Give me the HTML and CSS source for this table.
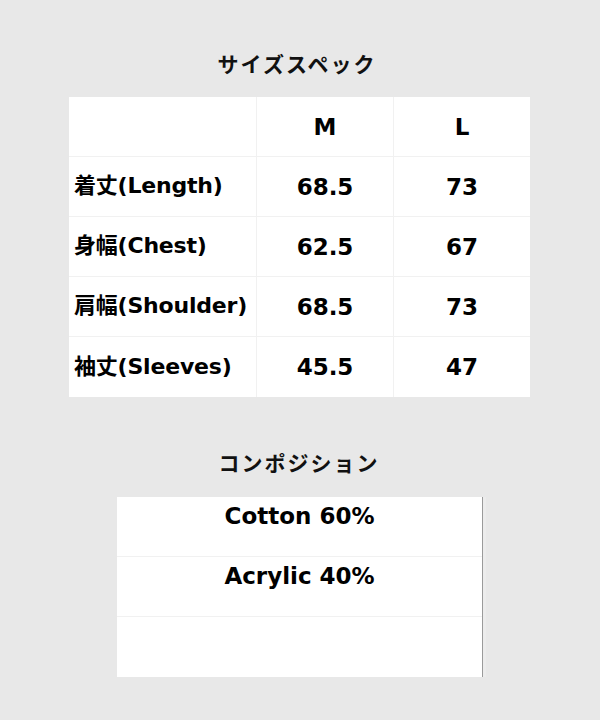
FILE: index.html
```html
<!DOCTYPE html>
<html lang="ja">
<head>
<meta charset="utf-8">
<title>サイズスペック</title>
<link rel="stylesheet" href="styles.css">
</head>
<body>
<main class="page">
  <h2 class="title title-size">サイズスペック</h2>
  <div class="spec">
    <div class="cell label"></div>
    <div class="cell head">M</div>
    <div class="cell head last">L</div>

    <div class="cell label">着丈(Length)</div>
    <div class="cell num">68.5</div>
    <div class="cell num last">73</div>

    <div class="cell label">身幅(Chest)</div>
    <div class="cell num">62.5</div>
    <div class="cell num last">67</div>

    <div class="cell label">肩幅(Shoulder)</div>
    <div class="cell num">68.5</div>
    <div class="cell num last">73</div>

    <div class="cell label bottom">袖丈(Sleeves)</div>
    <div class="cell num bottom">45.5</div>
    <div class="cell num last bottom">47</div>
  </div>

  <h2 class="title title-comp">コンポジション</h2>
  <div class="comp">
    <div class="comp-row">Cotton 60%</div>
    <div class="comp-row">Acrylic 40%</div>
    <div class="comp-row bottom"></div>
  </div>
</main>
</body>
</html>
```

FILE: styles.css
```css
html, body {
  margin: 0;
  padding: 0;
}
body {
  background: #e8e8e8;
  width: 600px;
  height: 720px;
  overflow: hidden;
  color: #000;
  font-family: "DejaVu Sans", "Noto Sans CJK JP", sans-serif;
}
.page {
  display: flex;
  flex-direction: column;
  align-items: center;
}
.title {
  margin: 0;
  font-family: "Noto Sans CJK JP", sans-serif;
  font-weight: 700;
  font-size: 21px;
  line-height: 30px;
  letter-spacing: 2px;
  color: #111;
  text-align: center;
}
.title-size {
  margin-top: 48px;
  margin-bottom: 19px;
  margin-left: -6px;
}
.title-comp {
  margin-top: 50px;
  margin-bottom: 20px;
  margin-left: -2px;
}
.spec {
  display: grid;
  grid-template-columns: 188px 137px 136px;
  grid-auto-rows: 60px;
  background: #fff;
  margin-left: -1px;
}
.cell {
  border-right: 1px solid #f1f1f1;
  border-bottom: 1px solid #f1f1f1;
  display: flex;
  align-items: center;
  font-weight: bold;
  line-height: 28px;
}
.cell.last {
  border-right: none;
}
.cell.bottom {
  border-bottom: none;
}
.label {
  padding-left: 5px;
  padding-bottom: 1px;
  font-size: 22px;
  letter-spacing: -0.2px;
}
.head, .num {
  justify-content: center;
  font-size: 23px;
}
.comp {
  width: 365px;
  background: #fff;
  border-right: 1px solid #9a9a9a;
  box-shadow: 3px 0 0 #ececec;
}
.comp-row {
  border-bottom: 1px solid #f1f1f1;
  text-align: center;
  font-weight: bold;
  font-size: 23px;
  line-height: 27px;
  padding-top: 6px;
  box-sizing: content-box;
  height: 53px;
}
.comp-row.bottom {
  border-bottom: none;
  height: 54px;
}
```
